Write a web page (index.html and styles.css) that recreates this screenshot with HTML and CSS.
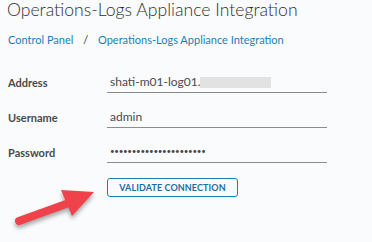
FILE: index.html
```html
<!DOCTYPE html>
<html lang="en">
<head>
    <meta charset="UTF-8">
    <title>Operations-Logs Appliance Integration</title>
    <link rel="stylesheet" href="styles.css">
</head>
<body>
    <div class="page">
        <h1 class="title">Operations-Logs Appliance Integration</h1>
        <div class="breadcrumb">
            <a href="#">Control Panel</a>
            <span class="sep">/</span>
            <a href="#">Operations-Logs Appliance Integration</a>
        </div>

        <form class="settings">
            <div class="row">
                <label>Address</label>
                <div class="field">shati-m01-log01.<span class="blur"></span></div>
            </div>
            <div class="row">
                <label>Username</label>
                <div class="field">admin</div>
            </div>
            <div class="row">
                <label>Password</label>
                <div class="field dots">••••••••••••••••••••••</div>
            </div>
            <div class="actions">
                <button type="button" class="btn-outline">VALIDATE CONNECTION</button>
            </div>
        </form>

        <!-- annotation arrow -->
        <svg class="arrow" width="100" height="60" viewBox="0 0 100 60">
            <path d="M19 41 L66 24" stroke="#f0424a" stroke-width="8" stroke-linecap="round" fill="none"/>
            <path d="M94 12 L61 10 L72 36 Z" fill="#f0424a"/>
        </svg>
    </div>
</body>
</html>
```

FILE: styles.css
```css
html, body {
    height: 100%;
}

body {
    margin: 0;
    padding: 0;
    background: #fafbfc;
    font-family: Lato, Arial, sans-serif;
    color: #333333;
}

.page {
    position: relative;
    min-height: 100%;
    box-sizing: border-box;
    padding: 0 7px;
}

.title {
    margin: 0;
    font-size: 17.6px;
    font-weight: 300;
    color: #2f2f2f;
    line-height: 20px;
}

.breadcrumb {
    margin-top: 13px;
    padding-left: 1px;
    font-size: 11px;
    line-height: 14px;
}

.breadcrumb a {
    color: #1a7fb5;
    text-decoration: none;
}

.breadcrumb .sep {
    color: #333333;
    margin: 0 7px;
}

.settings {
    margin-top: 11px;
}

.row {
    display: grid;
    grid-template-columns: 100px 220px;
    align-items: end;
    height: 35px;
}

.row label {
    padding-left: 1px;
    font-size: 11px;
    font-weight: 700;
    color: #4a4a4a;
    padding-bottom: 4px;
}

.field {
    font-size: 12px;
    color: #4a4a4a;
    padding: 0 3px 3px;
    border-bottom: 1px solid #8c8c8c;
    height: 15px;
    line-height: 15px;
}

.field .blur {
    display: inline-block;
    width: 71px;
    height: 11px;
    background: #e2e2e2;
    vertical-align: -2px;
}

.field.dots {
    font-size: 8px;
    letter-spacing: -0.3px;
}

.actions {
    display: flex;
    padding-left: 100px;
    margin-top: 15px;
}

.btn-outline {
    width: 131px;
    height: 19px;
    padding: 0;
    background: transparent;
    border: 1px solid #1a7fb5;
    border-radius: 3px;
    color: #1a6fa0;
    font-family: Lato, Arial, sans-serif;
    font-size: 9px;
    font-weight: 700;
    letter-spacing: 0.1px;
}

.arrow {
    position: absolute;
    left: 0;
    top: 180px;
    filter: drop-shadow(0 3px 2px rgba(0, 0, 0, 0.35));
}
```
